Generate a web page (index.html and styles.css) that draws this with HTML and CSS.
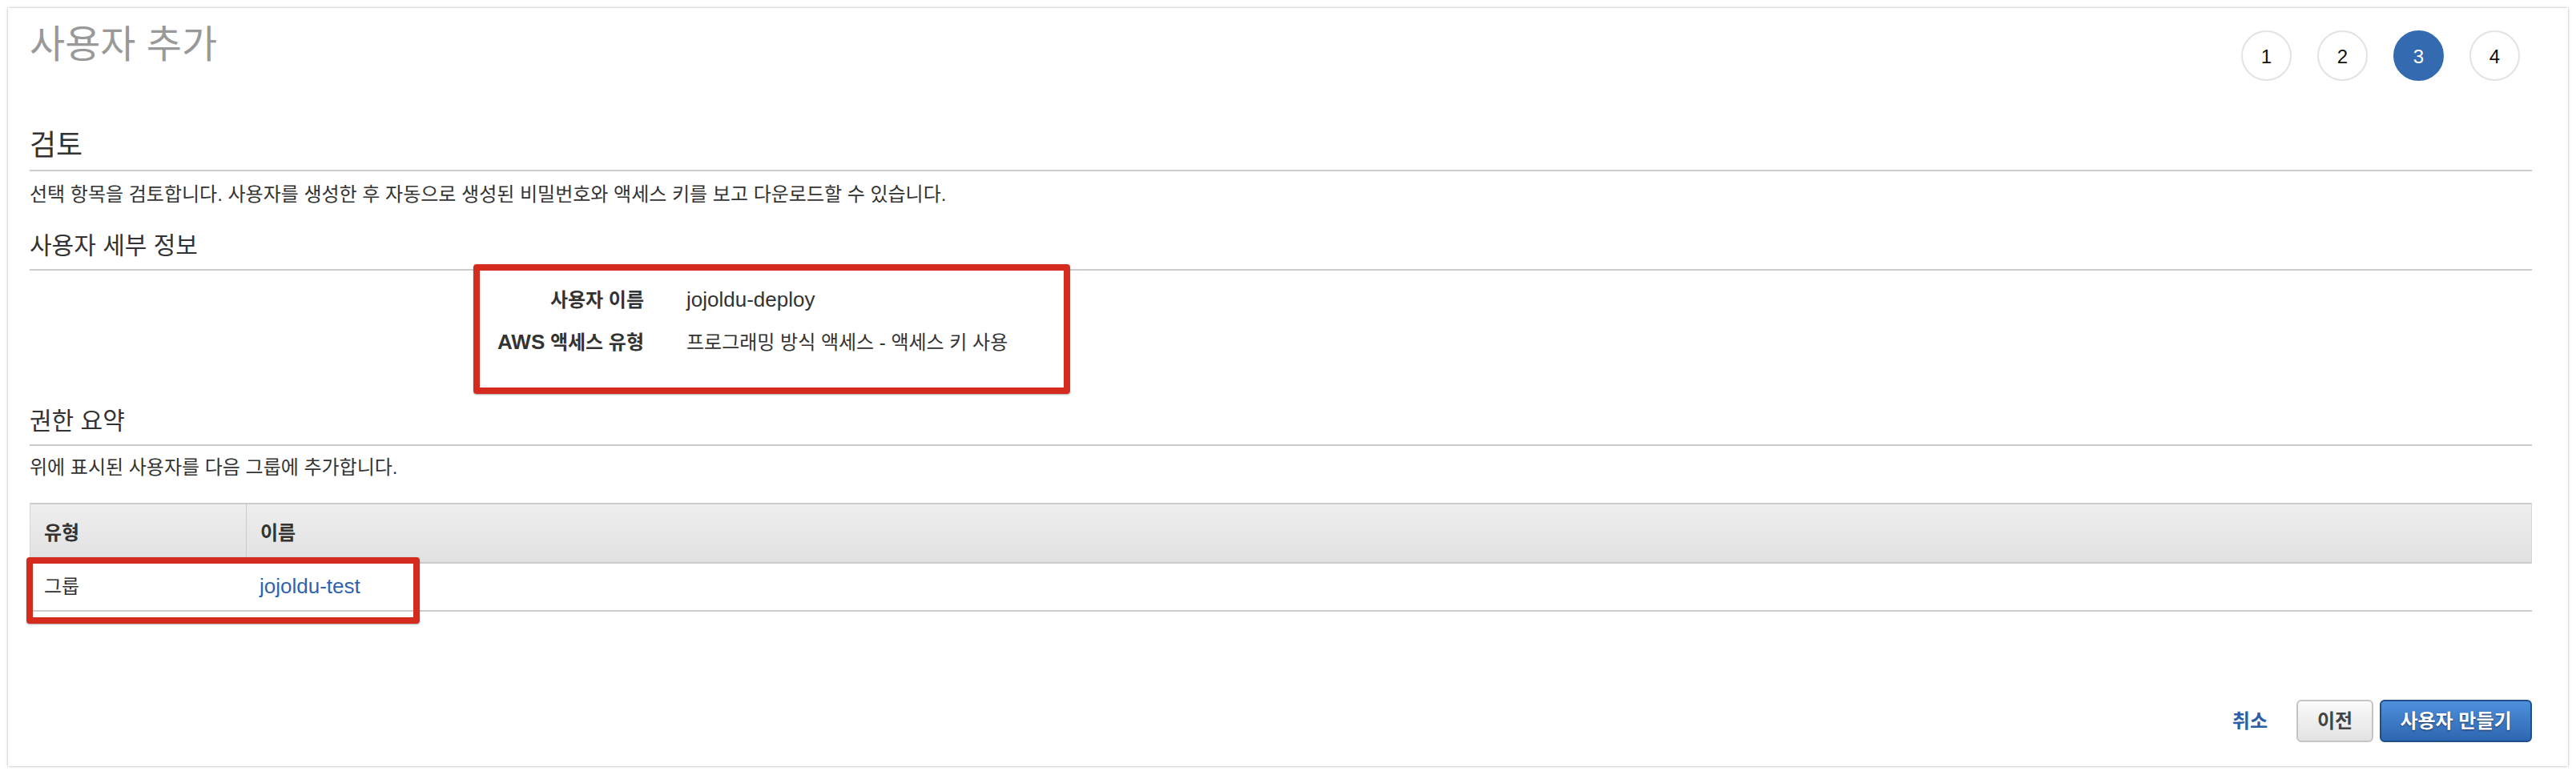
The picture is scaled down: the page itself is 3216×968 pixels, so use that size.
FILE: index.html
```html
<!DOCTYPE html>
<html lang="ko">
<head>
<meta charset="utf-8">
<title>사용자 추가</title>
<link rel="stylesheet" href="styles.css">
</head>
<body>
<div class="card">
  <div class="header">
    <h1 class="title">사용자 추가</h1>
    <ol class="steps">
      <li class="step">1</li>
      <li class="step">2</li>
      <li class="step active">3</li>
      <li class="step">4</li>
    </ol>
  </div>

  <h2 class="section-title">검토</h2>
  <p class="desc desc-lead">선택 항목을 검토합니다. 사용자를 생성한 후 자동으로 생성된 비밀번호와 액세스 키를 보고 다운로드할 수 있습니다.</p>

  <h3 class="sub-title">사용자 세부 정보</h3>
  <dl class="details">
    <dt>사용자 이름</dt>
    <dd><span class="en">jojoldu-deploy</span></dd>
    <dt><span class="en">AWS</span> 액세스 유형</dt>
    <dd>프로그래밍 방식 액세스 - 액세스 키 사용</dd>
  </dl>

  <h3 class="sub-title">권한 요약</h3>
  <p class="desc">위에 표시된 사용자를 다음 그룹에 추가합니다.</p>

  <table class="perm-table">
    <colgroup><col class="col-type"><col></colgroup>
    <thead>
      <tr><th>유형</th><th>이름</th></tr>
    </thead>
    <tbody>
      <tr><td>그룹</td><td><a class="link en" href="#">jojoldu-test</a></td></tr>
    </tbody>
  </table>

  <div class="actions">
    <a class="cancel" href="#">취소</a>
    <button class="btn btn-secondary" type="button">이전</button>
    <button class="btn btn-primary" type="button">사용자 만들기</button>
  </div>

  <div class="highlight hl-details"></div>
  <div class="highlight hl-group"></div>
</div>
</body>
</html>
```

FILE: styles.css
```css
html, body {
  margin: 0;
  padding: 0;
  background: #ffffff;
}

body {
  font-family: "Liberation Sans", "Noto Sans CJK KR", sans-serif;
  font-size: 24px;
  line-height: 30px;
  color: #333333;
}

.card {
  position: relative;
  box-sizing: border-box;
  width: 3196px;
  margin: 10px;
  padding: 16px 45px 30px 27px;
  background: #ffffff;
  box-shadow: 0 0 3px rgba(0, 0, 0, 0.35);
}

.en {
  font-family: "Liberation Sans", sans-serif;
  font-size: 26px;
  line-height: 1;
}

/* header */
.header {
  display: flex;
  align-items: flex-start;
}

.title {
  margin: 0;
  font-size: 48px;
  line-height: 60px;
  font-weight: 400;
  color: #999999;
}

.steps {
  display: flex;
  gap: 32px;
  margin: 12px 15px 0 auto;
  padding: 0;
  list-style: none;
}

.step {
  box-sizing: border-box;
  width: 63px;
  height: 63px;
  padding-top: 3px;
  border: 2px solid #e3e3e3;
  border-radius: 50%;
  display: flex;
  align-items: center;
  justify-content: center;
  font-family: "Liberation Sans", sans-serif;
  font-size: 24px;
  color: #111111;
}

.step.active {
  background: #346bb0;
  border-color: #346bb0;
  color: #ffffff;
}

/* sections */
.section-title {
  margin: 59px 0 0;
  padding-bottom: 8px;
  border-bottom: 2px solid #cccccc;
  font-size: 36px;
  line-height: 44px;
  font-weight: 400;
  color: #333333;
}

.sub-title {
  margin: 30px 0 0;
  padding-bottom: 10px;
  border-bottom: 2px solid #cccccc;
  font-size: 30px;
  line-height: 38px;
  font-weight: 400;
  color: #333333;
}

.desc {
  margin: 12px 0 0;
}

.desc-lead {
  margin-top: 14px;
}

/* details */
.details {
  display: grid;
  grid-template-columns: 767px auto;
  column-gap: 53px;
  row-gap: 23px;
  margin: 22px 0 64px;
}

.details dt {
  text-align: right;
  font-weight: 700;
  color: #333333;
}

.details dd {
  margin: 0;
}

/* table */
.perm-table {
  width: 100%;
  margin-top: 29px;
  border-collapse: separate;
  border-spacing: 0;
  table-layout: fixed;
}

.col-type {
  width: 270px;
}

.perm-table th {
  padding: 21px 0 21px 17px;
  border-top: 2px solid #cccccc;
  border-bottom: 2px solid #cccccc;
  background: linear-gradient(#eeeeee, #e1e1e1);
  text-align: left;
  font-weight: 700;
  color: #333333;
}

.perm-table th:first-child {
  border-left: 1px solid #d6d6d6;
}

.perm-table th + th {
  border-left: 1px solid #cccccc;
  border-right: 1px solid #d6d6d6;
}

.perm-table td {
  padding: 14px 0 14px 18px;
  border-bottom: 2px solid #cccccc;
}

.perm-table td + td {
  padding-left: 17px;
}

.link {
  color: #2f63b0;
  text-decoration: none;
}

/* actions */
.actions {
  display: flex;
  justify-content: flex-end;
  align-items: center;
  gap: 8px;
  margin-top: 110px;
}

.cancel {
  margin-right: 28px;
  font-weight: 700;
  color: #2c5ea6;
  text-decoration: none;
}

.btn {
  box-sizing: border-box;
  height: 53px;
  padding: 0;
  border-radius: 6px;
  border: 2px solid;
  font-family: "Liberation Sans", "Noto Sans CJK KR", sans-serif;
  font-size: 24px;
  font-weight: 700;
  line-height: 30px;
  letter-spacing: normal;
  white-space: nowrap;
  text-align: center;
}

.btn-secondary {
  width: 96px;
  border-color: #c4c4c4;
  background: linear-gradient(#fbfbfb, #e2e2e2);
  color: #444444;
}

.btn-primary {
  width: 190px;
  border-color: #1f4e8c;
  background: linear-gradient(#4e90dd, #2e66b0);
  color: #ffffff;
  text-shadow: 0 1px 2px rgba(0, 0, 0, 0.55);
}

/* annotation overlays */
.highlight {
  position: absolute;
  box-sizing: border-box;
  border: 8px solid #d52b1e;
  border-radius: 4px;
  box-shadow: 0 1px 2px rgba(0, 0, 0, 0.35);
}

.hl-details {
  left: 581px;
  top: 320px;
  width: 745px;
  height: 162px;
}

.hl-group {
  left: 23px;
  top: 686px;
  width: 491px;
  height: 83px;
}
```
